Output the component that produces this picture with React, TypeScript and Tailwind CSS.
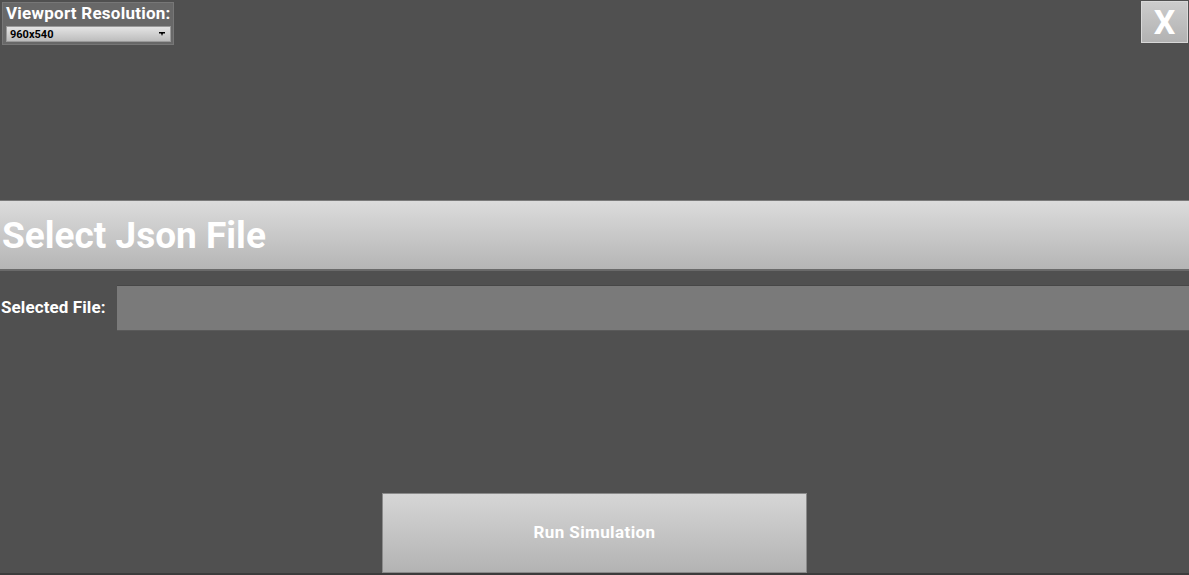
export default function App() {
  const font = { fontFamily: "Roboto, 'Liberation Sans', sans-serif" };
  return (
    <div className="w-[1189px] h-[575px] bg-[#505050] flex flex-col overflow-hidden relative" style={font}>
      <div className="flex justify-between items-start h-[200px]">
        <div className="mt-[2px] ml-[2px] w-[172px] h-[43px] bg-[#686868] border border-[#777777] flex flex-col px-[2px]">
          <div className="text-white font-bold text-[17px] tracking-[0.25px] leading-[21px] pl-[1px] whitespace-nowrap">Viewport Resolution:</div>
          <div className="mt-[2px] ml-[1px] w-[165px] h-[16px] bg-gradient-to-b from-[#e4e4e4] to-[#bdbdbd] border border-[#9a9a9a] flex items-center justify-between px-[3px]">
            <span className="text-black font-bold text-[11px] leading-none">960x540</span>
            <svg width="6" height="4" viewBox="0 0 6 4" className="mr-[2px]">
              <path d="M0 0h6v1.5H4L3 4L2 1.5H0z" fill="#000" />
            </svg>
          </div>
        </div>
        <div className="mt-[1px] mr-[1px] w-[47px] h-[42px] bg-gradient-to-b from-[#cccccc] to-[#b2b2b2] border border-[#d8d8d8] flex items-center justify-center">
          <span className="text-white font-bold text-[34px] leading-none">X</span>
        </div>
      </div>
      <div className="h-[71px] border-t border-t-[#7a7a7a] border-b-2 border-b-[#6a6a6a] bg-gradient-to-b from-[#dcdcdc] to-[#b5b5b5] flex items-center">
        <span className="text-white font-bold text-[37px] leading-none pl-[2px] whitespace-nowrap">Select Json File</span>
      </div>
      <div className="flex items-center mt-[14px] h-[46px]">
        <span className="text-white font-bold text-[17px] tracking-[0.1px] w-[117px] pl-[1px] whitespace-nowrap">Selected File:</span>
        <div className="flex-1 h-[46px] bg-[#7a7a7a] border-t border-t-[#474747] border-b border-b-[#5a5a5a]"></div>
      </div>
      <div className="flex-1"></div>
      <div className="flex justify-center">
        <div className="w-[425px] h-[80px] bg-gradient-to-b from-[#d6d6d6] to-[#b3b3b3] border border-[#8a8a8a] flex items-center justify-center">
          <span className="text-white font-bold text-[17px] tracking-[0.4px] whitespace-nowrap">Run Simulation</span>
        </div>
      </div>
      <div className="h-[2px] bg-[#3c3c3c]"></div>
    </div>
  );
}
